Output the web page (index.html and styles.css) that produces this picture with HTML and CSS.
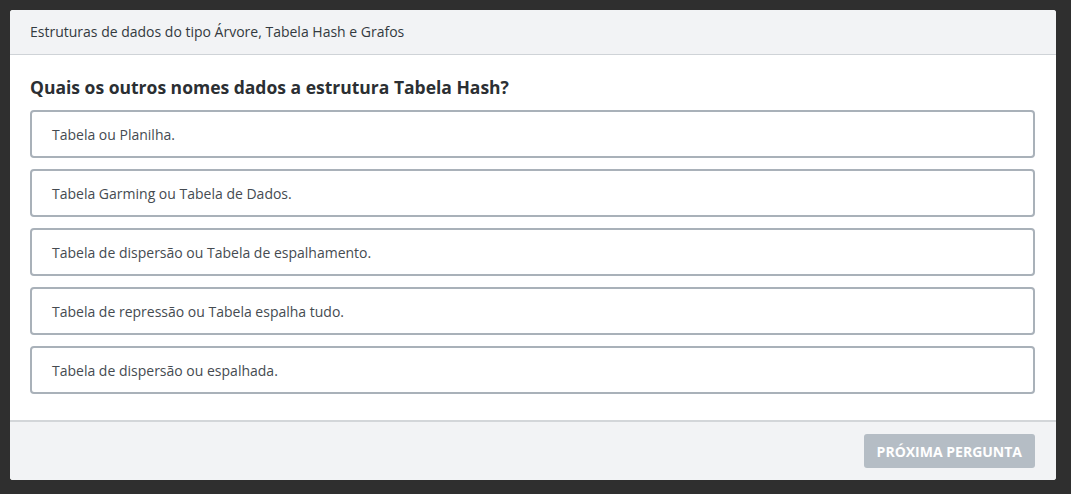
FILE: index.html
```html
<!DOCTYPE html>
<html lang="pt-BR">
<head>
<meta charset="utf-8">
<link rel="stylesheet" href="styles.css">
</head>
<body>
<div class="card">
  <div class="card-header">Estruturas de dados do tipo Árvore, Tabela Hash e Grafos</div>
  <div class="card-body">
    <h2 class="question">Quais os outros nomes dados a estrutura Tabela Hash?</h2>
    <div class="options">
      <div class="option">Tabela ou Planilha.</div>
      <div class="option">Tabela Garming ou Tabela de Dados.</div>
      <div class="option">Tabela de dispersão ou Tabela de espalhamento.</div>
      <div class="option">Tabela de repressão ou Tabela espalha tudo.</div>
      <div class="option">Tabela de dispersão ou espalhada.</div>
    </div>
  </div>
  <div class="card-footer">
    <button class="btn-next" disabled>Próxima pergunta</button>
  </div>
</div>
</body>
</html>
```
FILE: styles.css
```css
html, body {
  margin: 0;
  padding: 0;
  background: #2f2f2f;
}
body {
  padding: 10px 15px 13px 10px;
  font-family: "Open Sans", "Noto Sans", sans-serif;
}
.card {
  width: 1046px;
  background: #fff;
  border-radius: 3px;
  overflow: hidden;
}
.card-header {
  background: #f2f3f5;
  border-bottom: 1px solid #cfd3d7;
  height: 45px;
  box-sizing: border-box;
  padding: 12px 20px 0 20px;
  font-size: 14px;
  line-height: 20px;
  color: #333a40;
}
.card-body {
  padding: 19px 21px 26px 20px;
}
.question {
  margin: 0 0 10px 0;
  font-size: 17.5px;
  line-height: 26px;
  font-weight: 700;
  color: #2b2f33;
}
.options {
  display: flex;
  flex-direction: column;
  gap: 11px;
}
.option {
  height: 48px;
  box-sizing: border-box;
  border: 2px solid #a9b1b9;
  border-radius: 4px;
  padding: 0 20px;
  display: flex;
  align-items: center;
  font-size: 14px;
  color: #454b51;
}
.card-footer {
  background: #f2f3f5;
  border-top: 2px solid #d3d6d9;
  height: 60px;
  box-sizing: border-box;
  display: flex;
  justify-content: flex-end;
  align-items: flex-start;
  padding: 12px 21px 0 0;
}
.btn-next {
  height: 34px;
  padding: 0 13px;
  border: none;
  border-radius: 3px;
  background: #b5bdc5;
  color: #fff;
  font-family: "Open Sans", "Noto Sans", sans-serif;
  font-size: 14px;
  font-weight: 700;
  text-transform: uppercase;
  cursor: not-allowed;
}
```
